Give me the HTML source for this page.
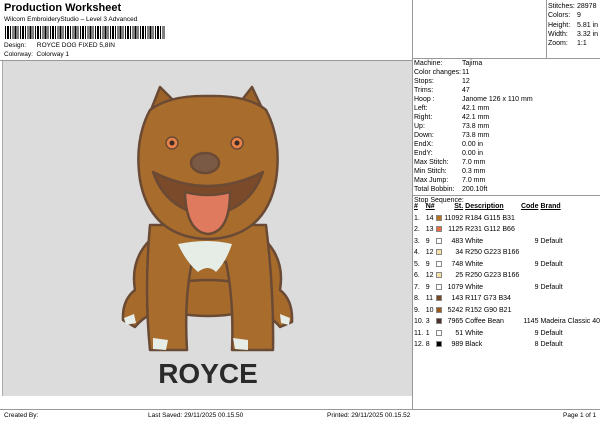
<!DOCTYPE html>
<html><head><meta charset="utf-8"><style>
*{margin:0;padding:0;box-sizing:border-box}
body{width:600px;height:424px;background:#fff;font-family:"Liberation Sans",sans-serif;color:#000;position:relative;overflow:hidden;font-size:7px}
.a{position:absolute;white-space:nowrap}
table{border-collapse:collapse;border-spacing:0}
.t td{padding:0;line-height:9px;height:9px;font-size:7px;white-space:nowrap}
.s td{line-height:11.5px;height:11.5px}
.sw{display:inline-block;width:6px;height:6px;border:1px solid #888;vertical-align:-1px}
</style></head><body>
<div class="a" style="left:4px;top:2px;font-size:11px;font-weight:bold">Production Worksheet</div>
<div class="a" style="left:4px;top:16px;font-size:6.5px">Wilcom EmbroideryStudio – Level 3 Advanced</div>
<div class="a" style="left:5px;top:26px;width:160px;height:13px;background:repeating-linear-gradient(90deg,#000 0 1px,#fff 1px 2px,#000 2px 4px,#fff 4px 5px,#000 5px 6px,#fff 6px 7.5px)"></div>
<div class="a" style="left:4px;top:42px;font-size:6.5px">Design:&nbsp;&nbsp;&nbsp;&nbsp;&nbsp;&nbsp;ROYCE DOG FIXED 5,8IN</div>
<div class="a" style="left:4px;top:51px;font-size:6.5px">Colorway:&nbsp; Colorway 1</div>
<div class="a" style="left:0;top:60px;width:412px;border-top:1px solid #999"></div>
<div class="a" style="left:2px;top:61px;width:410px;height:335px;background:#dcdcdc;border-left:1px solid #aaa"></div>
<div class="a" style="left:412px;top:0;height:409px;border-left:1px solid #999"></div>
<div class="a" style="left:546px;top:0;height:58px;border-left:1px solid #999"></div>
<div class="a" style="left:412px;top:58px;width:188px;border-top:1px solid #999"></div>
<div class="a" style="left:412px;top:195px;width:188px;border-top:1px solid #999"></div>
<div class="a" style="left:0;top:409px;width:600px;border-top:1px solid #999"></div>
<table class="t a" style="left:548px;top:2px"><tr><td style="width:29px;height:9.25px">Stitches:</td><td>28978</td></tr><tr><td style="height:9.25px">Colors:</td><td>9</td></tr><tr><td style="height:9.25px">Height:</td><td>5.81 in</td></tr><tr><td style="height:9.25px">Width:</td><td>3.32 in</td></tr><tr><td style="height:9.25px">Zoom:</td><td>1:1</td></tr></table>
<table class="t a" style="left:414px;top:59px"><tr><td style="width:48px">Machine:</td><td>Tajima</td></tr><tr><td>Color changes:</td><td>11</td></tr><tr><td>Stops:</td><td>12</td></tr><tr><td>Trims:</td><td>47</td></tr><tr><td>Hoop :</td><td>Janome 126 x 110 mm</td></tr><tr><td>Left:</td><td>42.1 mm</td></tr><tr><td>Right:</td><td>42.1 mm</td></tr><tr><td>Up:</td><td>73.8 mm</td></tr><tr><td>Down:</td><td>73.8 mm</td></tr><tr><td>EndX:</td><td>0.00 in</td></tr><tr><td>EndY:</td><td>0.00 in</td></tr><tr><td>Max Stitch:</td><td>7.0 mm</td></tr><tr><td>Min Stitch:</td><td>0.3 mm</td></tr><tr><td>Max Jump:</td><td>7.0 mm</td></tr><tr><td>Total Bobbin:</td><td>200.10ft</td></tr></table>
<div class="a" style="left:414px;top:196px;line-height:9px">Stop Sequence:</div>
<table class="t s a" style="left:414px;top:201px"><tr style="font-weight:bold"><td style="width:12px;text-decoration:underline">#</td><td style="width:10px;text-decoration:underline">N#</td><td style="width:9px"></td><td style="width:18px;text-align:right;text-decoration:underline">St.</td><td style="width:58px;padding-left:2px;text-decoration:underline">Description</td><td style="width:17px;text-align:right;text-decoration:underline">Code</td><td style="padding-left:2px;text-decoration:underline">Brand</td></tr>
<tr><td>1.</td><td>14</td><td><span class="sw" style="background:#b87320"></span></td><td align="right">11092</td><td style="padding-left:2px">R184 G115 B31</td><td></td><td></td></tr>
<tr><td>2.</td><td>13</td><td><span class="sw" style="background:#e77042"></span></td><td align="right">1125</td><td style="padding-left:2px">R231 G112 B66</td><td></td><td></td></tr>
<tr><td>3.</td><td>9</td><td><span class="sw" style="background:#fff"></span></td><td align="right">483</td><td style="padding-left:2px">White</td><td align="right">9</td><td style="padding-left:2px">Default</td></tr>
<tr><td>4.</td><td>12</td><td><span class="sw" style="background:#fadfa6"></span></td><td align="right">34</td><td style="padding-left:2px">R250 G223 B166</td><td></td><td></td></tr>
<tr><td>5.</td><td>9</td><td><span class="sw" style="background:#fff"></span></td><td align="right">748</td><td style="padding-left:2px">White</td><td align="right">9</td><td style="padding-left:2px">Default</td></tr>
<tr><td>6.</td><td>12</td><td><span class="sw" style="background:#fadfa6"></span></td><td align="right">25</td><td style="padding-left:2px">R250 G223 B166</td><td></td><td></td></tr>
<tr><td>7.</td><td>9</td><td><span class="sw" style="background:#fff"></span></td><td align="right">1079</td><td style="padding-left:2px">White</td><td align="right">9</td><td style="padding-left:2px">Default</td></tr>
<tr><td>8.</td><td>11</td><td><span class="sw" style="background:#754922"></span></td><td align="right">143</td><td style="padding-left:2px">R117 G73 B34</td><td></td><td></td></tr>
<tr><td>9.</td><td>10</td><td><span class="sw" style="background:#985a15"></span></td><td align="right">5242</td><td style="padding-left:2px">R152 G90 B21</td><td></td><td></td></tr>
<tr><td>10.</td><td>3</td><td><span class="sw" style="background:#4a3326"></span></td><td align="right">7965</td><td style="padding-left:2px">Coffee Bean</td><td align="right">1145</td><td style="padding-left:2px">Madeira Classic 40</td></tr>
<tr><td>11.</td><td>1</td><td><span class="sw" style="background:#fff"></span></td><td align="right">51</td><td style="padding-left:2px">White</td><td align="right">9</td><td style="padding-left:2px">Default</td></tr>
<tr><td>12.</td><td>8</td><td><span class="sw" style="background:#000"></span></td><td align="right">989</td><td style="padding-left:2px">Black</td><td align="right">8</td><td style="padding-left:2px">Default</td></tr></table>
<svg class="a" style="left:0;top:0" width="412" height="400" viewBox="0 0 412 400">
<g stroke="#6a4a34" stroke-width="2.5" stroke-linejoin="round">
<path d="M123 320 Q122 300 135 290 Q130 260 150 240 L265 240 Q285 260 280 290 Q293 300 292 322 L280 327 Q270 315 258 312 L158 312 Q145 315 135 327 Z" fill="#a66a2a"/>
<ellipse cx="208" cy="298" rx="55" ry="18" fill="#a66a2a"/>
<path d="M150 225 Q144 290 150 350 L187 350 Q184 300 192 262 L226 262 Q234 300 232 350 L273 350 Q274 290 266 225 Z" fill="#a86c2c"/>
<path d="M145 125 L160 87 L178 105 Z" fill="#9a6228"/>
<path d="M238 105 L252 87 L270 125 Z" fill="#9a6228"/>
<path d="M150 110 Q170 95 208 96 Q248 95 266 110 Q282 140 276 180 Q268 225 230 236 Q208 242 186 236 Q148 225 140 180 Q134 140 150 110 Z" fill="#a86c2c"/>
<path d="M153 172 Q208 200 263 172 Q250 210 208 216 Q166 210 153 172 Z" fill="#7a4a2a"/>
<path d="M185 192 Q186 232 208 234 Q230 232 230 192 Q208 198 185 192 Z" fill="#e07a5e"/>
<ellipse cx="205" cy="163" rx="14" ry="10" fill="#7a5a44"/>
</g>
<circle cx="172" cy="143" r="6" fill="#e8824a" stroke="#6a4a34" stroke-width="1.5"/><circle cx="172" cy="143" r="2.5" fill="#3a2a20"/>
<circle cx="237" cy="143" r="6" fill="#e8824a" stroke="#6a4a34" stroke-width="1.5"/><circle cx="237" cy="143" r="2.5" fill="#3a2a20"/>
<path d="M178 244 Q208 238 232 244 Q226 262 216 272 Q208 264 198 272 Q186 262 178 244 Z" fill="#e6ece6"/>
<path d="M153 338 L168 340 L166 350 L153 349 Z M233 338 L248 340 L248 350 L235 349 Z M124 318 L134 314 L136 323 L126 325 Z M280 314 L290 318 L289 325 L281 323 Z" fill="#e6ece6"/>
<text x="208" y="383" text-anchor="middle" font-family="Liberation Sans,sans-serif" font-weight="bold" font-size="28" fill="#2a2a2a">ROYCE</text>
</svg>
<div class="a" style="left:4px;top:412px;font-size:6.5px">Created By:</div>
<div class="a" style="left:148px;top:412px;font-size:6.5px">Last Saved: 29/11/2025 00.15.50</div>
<div class="a" style="left:327px;top:412px;font-size:6.5px">Printed: 29/11/2025 00.15.52</div>
<div class="a" style="left:563px;top:412px;font-size:6.5px">Page 1 of 1</div>
</body></html>
